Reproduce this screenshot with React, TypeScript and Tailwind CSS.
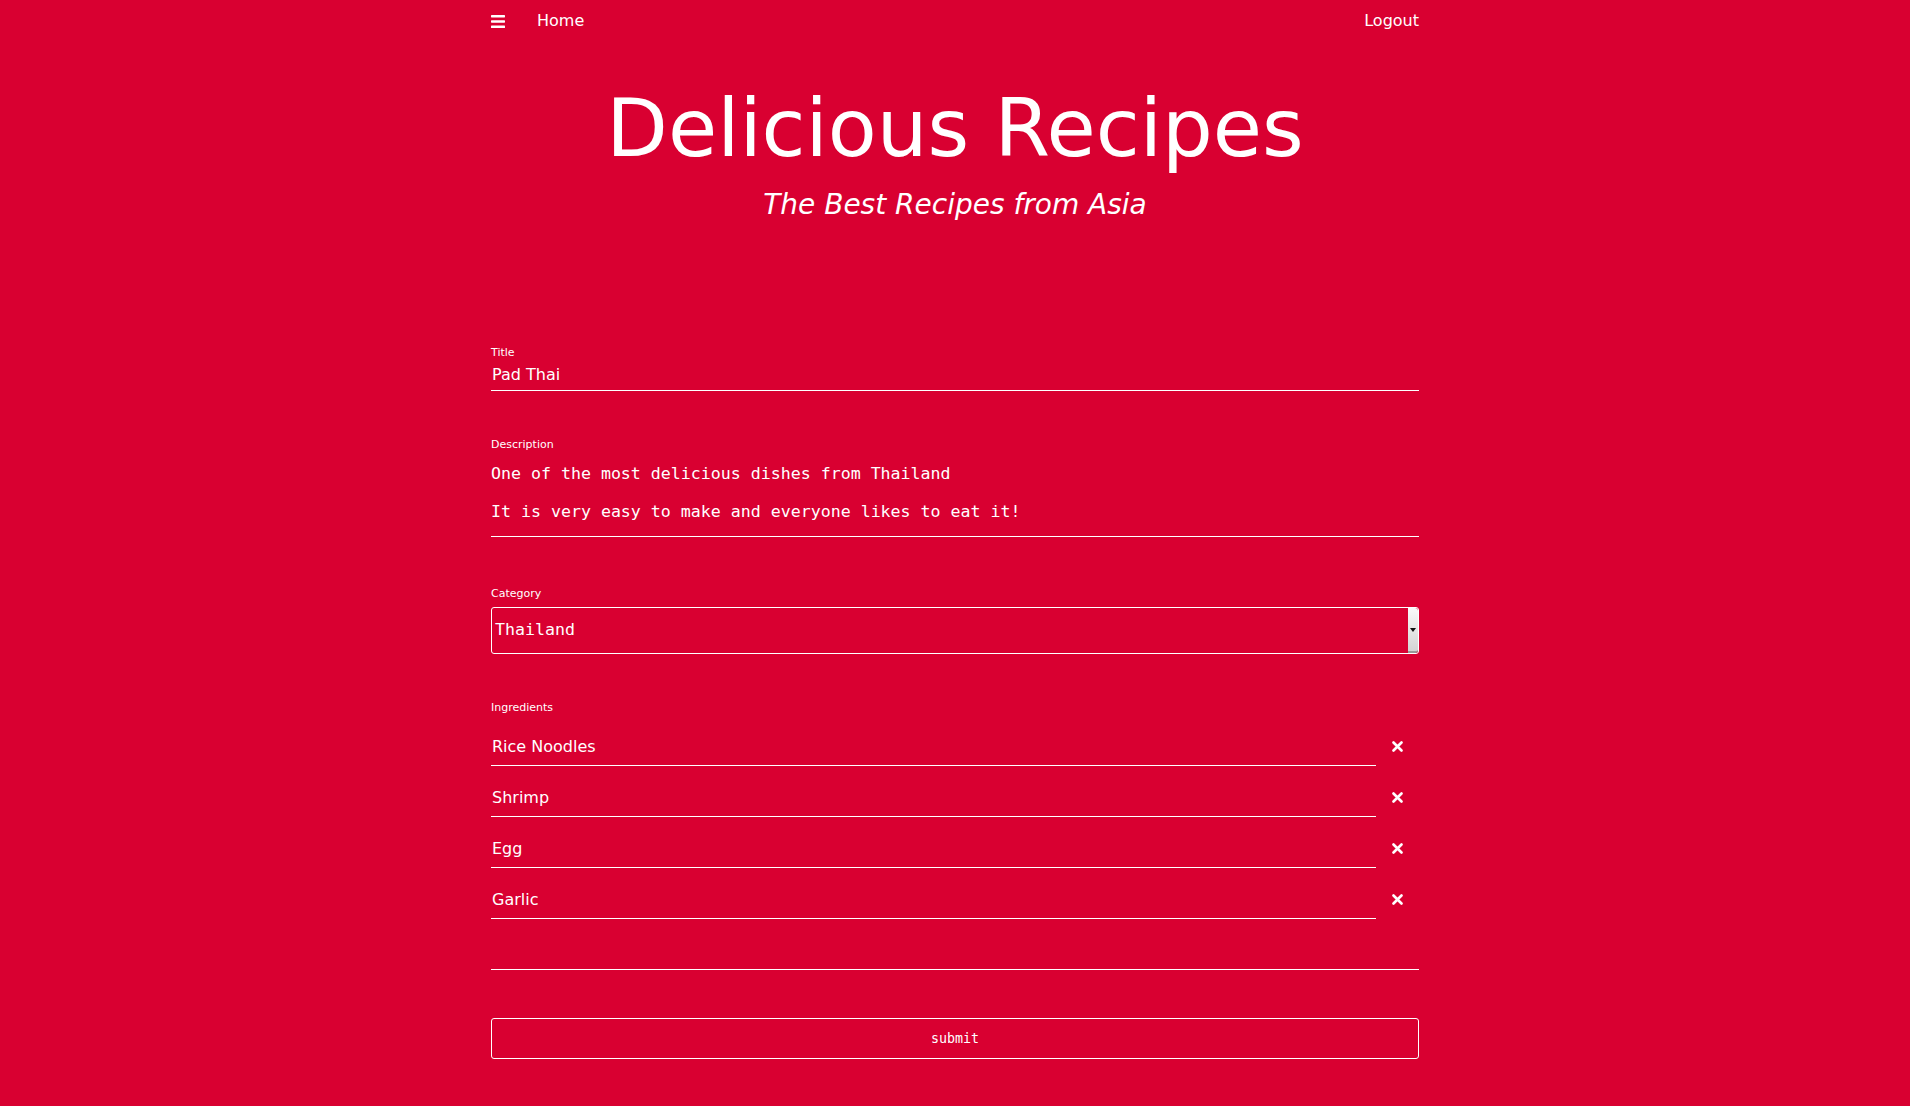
import React from 'react';

const ingredients = ['Rice Noodles', 'Shrimp', 'Egg', 'Garlic'];

const sans = { fontFamily: '"DejaVu Sans", Verdana, sans-serif' };

const Bars = () => (
  <svg width="14" height="13" viewBox="0 0 14 13" fill="white">
    <rect x="0" y="0" width="14" height="2.4" rx="0.6" />
    <rect x="0" y="5.3" width="14" height="2.4" rx="0.6" />
    <rect x="0" y="10.6" width="14" height="2.4" rx="0.6" />
  </svg>
);

const Times = () => (
  <svg width="11" height="11" viewBox="0 0 11 11">
    <path d="M1.5 1.5 L9.5 9.5 M9.5 1.5 L1.5 9.5" stroke="white" strokeWidth="2.6" strokeLinecap="round" />
  </svg>
);

const Label: React.FC<{ children: React.ReactNode }> = ({ children }) => (
  <div className="text-[11px] leading-[13px] text-white">{children}</div>
);

export default function App() {
  return (
    <div className="min-h-[1106px] w-full bg-[#d90031] text-white font-['DejaVu_Sans',sans-serif]" style={sans}>
      <div className="mx-auto w-[928px]">
        {/* Nav */}
        <nav className="flex h-[42px] items-center justify-between text-[16px]">
          <div className="flex items-center">
            <Bars />
            <span className="ml-[32px]">Home</span>
          </div>
          <span>Logout</span>
        </nav>

        {/* Header */}
        <header className="text-center">
          <h1 className="mt-[47px] text-[80px] leading-none">Delicious Recipes</h1>
          <p className="mt-[22px] text-[28px] leading-none italic">The Best Recipes from Asia</p>
        </header>

        <form className="mt-[127px]">
          {/* Title */}
          <Label>Title</Label>
          <div className="flex h-[32px] items-center border-b border-white pl-[1px] text-[16px]">Pad Thai</div>

          {/* Description */}
          <div className="mt-[47px]">
            <Label>Description</Label>
            <div className="whitespace-pre-wrap border-b border-white pt-[13px] pb-[15px] font-['DejaVu_Sans_Mono',monospace] text-[16.6px] leading-[19px]">
              {'One of the most delicious dishes from Thailand\n\nIt is very easy to make and everyone likes to eat it!'}
            </div>
          </div>

          {/* Category */}
          <div className="mt-[50px]">
            <Label>Category</Label>
            <div className="mt-[7px] flex h-[47px] rounded-[3px] border border-white">
              <div className="flex flex-1 items-center pl-[3px] font-['DejaVu_Sans_Mono',monospace] text-[16.6px]">Thailand</div>
              <div className="flex w-[10px] items-center justify-center rounded-r-[3px] border-b-2 border-[#999] bg-gradient-to-b from-[#fafafa] to-[#d4d4d4]">
                <svg width="6" height="4" viewBox="0 0 6 4">
                  <path d="M0 0 L6 0 L3 4 Z" fill="#111" />
                </svg>
              </div>
            </div>
          </div>

          {/* Ingredients */}
          <div className="mt-[47px]">
            <Label>Ingredients</Label>
            <div className="pt-[1px]">
              {ingredients.map((item) => (
                <div key={item} className="mt-[14px] flex">
                  <div className="flex h-[37px] w-[885px] items-center border-b border-white pl-[1px] text-[16px]">{item}</div>
                  <div className="flex flex-1 items-center justify-center pb-[3px]">
                    <Times />
                  </div>
                </div>
              ))}
              <div className="mt-[14px] h-[37px] border-b border-white" />
            </div>
          </div>

          <button
            type="button"
            className="mt-[48px] flex h-[41px] w-full items-center justify-center rounded-[3px] border border-white font-['DejaVu_Sans_Mono',monospace] text-[13.33px] text-white"
          >
            submit
          </button>
        </form>
      </div>
    </div>
  );
}
